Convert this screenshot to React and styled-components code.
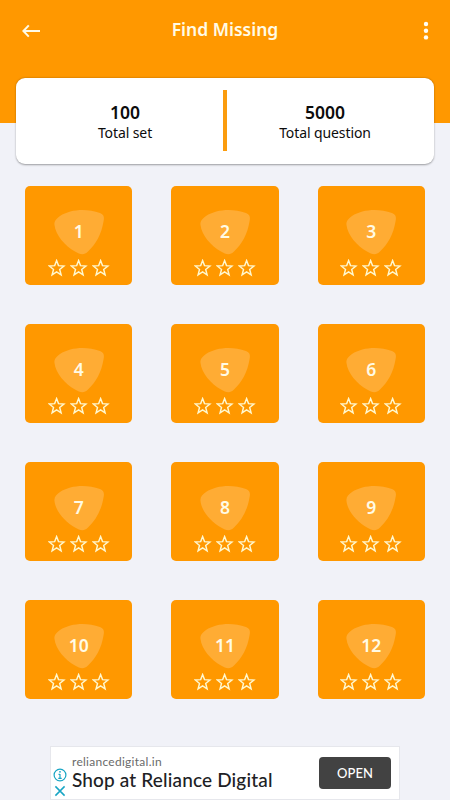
import React from "react";
import styled, { createGlobalStyle } from "styled-components";

const Global = createGlobalStyle`
  * { box-sizing: border-box; }
  body { margin: 0; background: #f1f2f8; }
`;

const Screen = styled.main`
  width: 450px;
  height: 800px;
  overflow: hidden;
  display: flex;
  flex-direction: column;
  background: #f1f2f8;
  font-family: "Noto Sans", "Open Sans", sans-serif;
`;

const Header = styled.header`
  flex: none;
  height: 122.5px;
  padding: 16px 14px 0 18px;
  display: grid;
  grid-template-columns: 26px 1fr 20px;
  align-items: start;
  background: #ff9800;
  color: #fffbe6;
`;

const IconButton = styled.button`
  height: 30px;
  padding: 0;
  border: 0;
  background: none;
  display: flex;
  align-items: center;
  justify-content: center;
`;

const Title = styled.h1`
  margin: 0 0 0 -10px;
  text-align: center;
  font-size: 17.5px;
  line-height: 26px;
  font-weight: 600;
`;

const Summary = styled.section`
  flex: none;
  width: 418px;
  height: 86.5px;
  margin: -45px 16px 0;
  display: grid;
  grid-template-columns: 207px 4px 1fr;
  align-items: center;
  background: #fff;
  border-radius: 9px;
  box-shadow: 0 0.5px 2px rgba(0, 0, 0, 0.36);
`;

const Divider = styled.span`
  height: 61px;
  background: #fb9c0e;
`;

const Stat = styled.div`
  display: flex;
  flex-direction: column;
  align-items: center;
  color: #0c0c0c;
  padding-top: 2px;
  padding-left: ${(p) => p.$inset || 0}px;
  padding-right: ${(p) => p.$outset || 0}px;
`;

const StatValue = styled.strong`
  font-size: 17.5px;
  line-height: 22px;
  font-weight: 600;
`;

const StatLabel = styled.span`
  font-size: 14px;
  line-height: 20px;
  letter-spacing: -0.1px;
`;

const Sets = styled.section`
  flex: none;
  margin: 22px 25px 0;
  display: grid;
  grid-template-columns: repeat(3, 107.4px);
  justify-content: space-between;
  row-gap: 39.5px;
`;

const SetTile = styled.button`
  height: 98.5px;
  padding: 22px 0 0;
  border: 0;
  border-radius: 5px;
  background: #ff9800;
  color: #fffbe6;
  display: flex;
  flex-direction: column;
  align-items: center;
  font-family: inherit;
`;

const Badge = styled.span`
  display: grid;
  width: 52px;
  height: 48px;
  place-items: center;
  > * { grid-area: 1 / 1; }
`;

const SetNumber = styled.span`
  font-size: 17.5px;
  line-height: 24px;
  font-weight: 600;
  margin-top: -2px;
`;

const Stars = styled.span`
  display: flex;
  gap: 4px;
  margin-top: 3px;
`;

const Ad = styled.aside`
  flex: none;
  width: 350px;
  height: 54px;
  margin: 47px 0 0 50px;
  display: grid;
  grid-template-columns: 21px 1fr 72px;
  background: #fff;
  border: 1px solid #e6e7ec;
  font-family: Lato, sans-serif;
`;

const AdChoices = styled.div`
  display: flex;
  flex-direction: column;
  align-items: center;
  padding: 21px 4px 0 0;
  gap: 3px;
`;

const AdCopy = styled.div`
  display: flex;
  flex-direction: column;
  padding-top: 7px;
`;

const AdDomain = styled.span`
  font-size: 12px;
  line-height: 16px;
  letter-spacing: 0.27px;
  color: #6a6a6a;
`;

const AdHeadline = styled.span`
  font-size: 19px;
  line-height: 22px;
  margin-top: -1px;
  letter-spacing: 0.15px;
  font-weight: 500;
  color: #202124;
  white-space: nowrap;
`;

const OpenButton = styled.button`
  width: 72px;
  height: 32px;
  margin: 10px 0 0 -8px;
  padding: 0;
  border: 0;
  border-radius: 4px;
  background: #424242;
  color: #fff;
  font: 500 13px/32px Lato, sans-serif;
`;

const BackIcon = () => (
  <svg width="18" height="14" viewBox="0 0 18 14" fill="none" stroke="#fffbe6" strokeWidth="2">
    <path d="M18 7H1.5M6.8 1.4 1.4 7l5.4 5.6" />
  </svg>
);

const MoreIcon = () => (
  <svg width="6" height="20" viewBox="0 0 6 20" fill="#fffdf5">
    <circle cx="3" cy="3" r="2.2" />
    <circle cx="3" cy="9.7" r="2.2" />
    <circle cx="3" cy="16.4" r="2.2" />
  </svg>
);

const Shield = () => (
  <svg width="52" height="48" viewBox="0 0 52 48">
    <path
      d="M1.5 17C1 13 3.5 10.5 7 8C17 1.5 33 0 47 5C51 6.5 51.5 9.5 50.5 13.5C48.5 26 43 36 35 43.5C31 47.5 27 46.5 22 43.5C12 38 2.5 27 1.5 17Z"
      fill="#ffac34"
    />
  </svg>
);

const Star = () => (
  <svg width="18" height="18" viewBox="0 0 18 18" fill="none" stroke="#fff8cf" strokeWidth="1.45">
    <path d="M8.6 1.6 10.5 6.6 15.9 7 11.7 10.5 13.1 15.8 8.6 12.9 4.1 15.8 5.5 10.5 1.3 7 6.7 6.6Z" />
  </svg>
);

const InfoIcon = () => (
  <svg width="14" height="14" viewBox="0 0 14 14" fill="none" stroke="#18a5c4">
    <circle cx="7" cy="7" r="5.9" strokeWidth="1.2" />
    <path d="M7 5.9v4.6M5.5 6.3H7M5.3 10.3h3.4" strokeWidth="1.2" />
    <circle cx="7" cy="3.8" r=".9" fill="#18a5c4" stroke="none" />
  </svg>
);

const CloseIcon = () => (
  <svg width="12" height="12" viewBox="0 0 12 12" fill="none" stroke="#18a5c4" strokeWidth="1.5">
    <path d="M1.4 1.4 10.6 10.6M10.6 1.4 1.4 10.6" />
  </svg>
);

const sets = Array.from({ length: 12 }, (_, i) => i + 1);

export default function App() {
  return (
    <Screen>
      <Global />
      <Header>
        <IconButton aria-label="Back"><BackIcon /></IconButton>
        <Title>Find Missing</Title>
        <IconButton aria-label="More"><MoreIcon /></IconButton>
      </Header>
      <Summary>
        <Stat $inset={11}>
          <StatValue>100</StatValue>
          <StatLabel>Total set</StatLabel>
        </Stat>
        <Divider />
        <Stat $outset={11}>
          <StatValue>5000</StatValue>
          <StatLabel>Total question</StatLabel>
        </Stat>
      </Summary>
      <Sets>
        {sets.map((n) => (
          <SetTile key={n}>
            <Badge>
              <Shield />
              <SetNumber>{n}</SetNumber>
            </Badge>
            <Stars><Star /><Star /><Star /></Stars>
          </SetTile>
        ))}
      </Sets>
      <Ad>
        <AdChoices>
          <InfoIcon />
          <CloseIcon />
        </AdChoices>
        <AdCopy>
          <AdDomain>reliancedigital.in</AdDomain>
          <AdHeadline>Shop at Reliance Digital</AdHeadline>
        </AdCopy>
        <OpenButton>OPEN</OpenButton>
      </Ad>
    </Screen>
  );
}
